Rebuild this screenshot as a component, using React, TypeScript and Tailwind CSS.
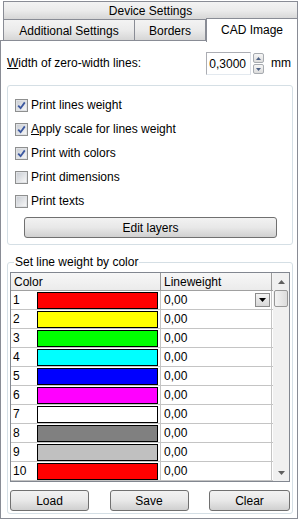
const rows = [
  { n: 1, c: '#ff0000' },
  { n: 2, c: '#ffff00' },
  { n: 3, c: '#00ff00' },
  { n: 4, c: '#00ffff' },
  { n: 5, c: '#0000ff' },
  { n: 6, c: '#ff00ff' },
  { n: 7, c: '#ffffff' },
  { n: 8, c: '#808080' },
  { n: 9, c: '#c0c0c0' },
  { n: 10, c: '#ff0000' },
]

function CheckBox({ checked }: { checked: boolean }) {
  return (
    <span className="flex h-[13px] w-[13px] items-center justify-center border border-[#8e8f8f] bg-white">
      <span className="flex h-[11px] w-[11px] items-center justify-center border border-[#e0e2e5] bg-gradient-to-br from-[#cbcfd5] to-[#f6f6f6]">
        {checked && (
          <svg width="9" height="9" viewBox="0 0 9 9">
            <path d="M1.2 4.6 L3.6 7.2 L7.8 1.4" fill="none" stroke="#3c58a0" strokeWidth="1.8" />
          </svg>
        )}
      </span>
    </span>
  )
}

function Option({ label, checked, u }: { label: string; checked: boolean; u?: boolean }) {
  return (
    <div className="flex h-[24px] items-center pl-[7px]">
      <CheckBox checked={checked} />
      <span className="ml-[3px]">
        {u ? (
          <>
            <span className="underline">{label[0]}</span>
            {label.slice(1)}
          </>
        ) : (
          label
        )}
      </span>
    </div>
  )
}

function Btn({ label, className }: { label: string; className: string }) {
  return (
    <div
      className={`flex h-[21px] items-center justify-center rounded-[3px] border border-[#707070] bg-gradient-to-b from-[#f2f2f2] via-[#e8e8e8] to-[#d0d0d0] ${className}`}
    >
      {label}
    </div>
  )
}

export default function App() {
  return (
    <div
      className="h-[520px] w-[299px] bg-white pt-px text-[12px] leading-[14px] text-black"
      style={{ fontFamily: '"Liberation Sans", Arial, sans-serif' }}
    >
      {/* tab rows */}
      <div className="ml-[3px] flex h-[19px] w-[295px] items-center justify-center border border-[#898c95] bg-gradient-to-b from-[#f3f3f3] via-[#ebebeb] to-[#d6d6d6]">
        Device Settings
      </div>
      <div className="ml-[3px] flex h-[20px] items-start">
        <div className="flex h-[20px] w-[132px] items-center justify-center border-x border-[#898c95] bg-gradient-to-b from-[#f3f3f3] via-[#ebebeb] to-[#d6d6d6] pt-[2px]">
          Additional Settings
        </div>
        <div className="flex h-[20px] w-[71px] items-center justify-center border-r border-[#898c95] bg-gradient-to-b from-[#f3f3f3] via-[#ebebeb] to-[#d6d6d6] pt-[2px]">
          Borders
        </div>
        <div className="relative z-10 -mt-[2px] flex h-[24px] w-[92px] items-center justify-center border-x border-t border-[#898c95] bg-white pb-px">
          CAD Image
        </div>
      </div>

      {/* page body */}
      <div className="flex h-[479px] w-[298px] flex-col border border-[#898c95] px-[6px]">
        <div className="mt-[11px] flex h-[23px] items-center">
          <span className="-mt-[2px] w-[201px]">
            <span className="underline">W</span>idth of zero-width lines:
          </span>
          <div className="flex h-[23px] w-[45px] items-center border border-[#abadb3] border-r-[#dbdfe6] border-b-[#e3e9ef] pl-[2px]">
            0,3000
          </div>
          <div className="ml-[2px] flex flex-col gap-px">
            <div className="flex h-[10px] w-[11px] items-center justify-center rounded-[2px] border border-[#a7abb0] bg-gradient-to-b from-[#f6f6f6] to-[#dcdcdc]">
              <svg width="5" height="3" viewBox="0 0 5 3">
                <path d="M0 3 L2.5 0 L5 3 Z" fill="#4d6185" />
              </svg>
            </div>
            <div className="flex h-[10px] w-[11px] items-center justify-center rounded-[2px] border border-[#a7abb0] bg-gradient-to-b from-[#f6f6f6] to-[#dcdcdc]">
              <svg width="5" height="3" viewBox="0 0 5 3">
                <path d="M0 0 L2.5 3 L5 0 Z" fill="#4d6185" />
              </svg>
            </div>
          </div>
          <span className="-mt-[2px] ml-[7px]">mm</span>
        </div>

        {/* options group */}
        <div className="mt-[10px] flex w-[286px] flex-col rounded-[3px] border border-[#d5dfe5] pt-[7px] pb-[6px]">
          <Option label="Print lines weight" checked />
          <Option label="Apply scale for lines weight" checked u />
          <Option label="Print with colors" checked />
          <Option label="Print dimensions" checked={false} />
          <Option label="Print texts" checked={false} />
          <Btn label="Edit layers" className="mt-[4px] ml-[16px] h-[20px] w-[253px]" />
        </div>

        {/* line weight group */}
        <fieldset className="mt-[10px] w-[286px] rounded-[3px] border border-[#d5dfe5] px-px pb-[2px]">
          <legend className="ml-[5px] px-px leading-[14px]">Set line weight by color</legend>
          <div className="mt-[3px] ml-px flex h-[210px] w-[280px] border border-[#828790]">
            <div className="flex w-[262px] flex-col">
              <div className="flex h-[18px] border-b border-[#a0a0a0] bg-gradient-to-b from-[#f7f7f7] to-[#ebebeb]">
                <div className="flex w-[150px] items-center border-r border-[#9a9a9a] pl-[3px]">Color</div>
                <div className="flex w-[111px] items-center border-r border-[#9a9a9a] pl-[3px]">Lineweight</div>
              </div>
              {rows.map((r) => (
                <div key={r.n} className="flex h-[19px] border-b border-[#c4c4c4]">
                  <div className="flex w-[150px] items-center border-r border-[#c4c4c4]">
                    <span className="w-[26px] pl-[2px]">{r.n}</span>
                    <span className="h-[17px] w-[121px] border border-black" style={{ backgroundColor: r.c }} />
                  </div>
                  <div className="flex w-[111px] items-center justify-between border-r border-[#c4c4c4] pl-[3px]">
                    <span>0,00</span>
                    {r.n === 1 && (
                      <span className="mr-px flex h-[14px] w-[15px] items-center justify-center border border-[#8c8c8c] bg-gradient-to-b from-[#f4f4f4] to-[#d8d8d8]">
                        <svg width="7" height="4" viewBox="0 0 7 4">
                          <path d="M0 0 L7 0 L3.5 4 Z" fill="#000" />
                        </svg>
                      </span>
                    )}
                  </div>
                </div>
              ))}
            </div>
            {/* scrollbar */}
            <div className="flex w-[16px] flex-col items-center bg-[#f0f0f0]">
              <div className="flex h-[17px] w-full items-center justify-center">
                <svg width="7" height="4" viewBox="0 0 7 4">
                  <path d="M0 4 L3.5 0 L7 4 Z" fill="#606060" />
                </svg>
              </div>
              <div className="h-[17px] w-[14px] rounded-[2px] border border-[#979797] bg-gradient-to-r from-[#f3f3f3] to-[#dcdcdc]" />
              <div className="flex-1" />
              <div className="flex h-[17px] w-full items-center justify-center">
                <svg width="7" height="4" viewBox="0 0 7 4">
                  <path d="M0 0 L7 0 L3.5 4 Z" fill="#606060" />
                </svg>
              </div>
            </div>
          </div>
          <div className="mt-[8px] flex justify-between px-px">
            <Btn label="Load" className="w-[79px]" />
            <Btn label="Save" className="w-[79px]" />
            <Btn label="Clear" className="w-[81px]" />
          </div>
        </fieldset>
      </div>
    </div>
  )
}
